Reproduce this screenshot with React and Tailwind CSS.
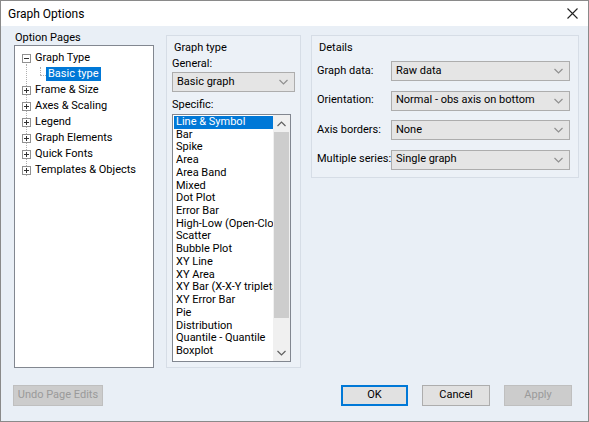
import React from 'react';

const font = { fontFamily: 'Roboto, "Noto Sans", sans-serif' };

const Chevron = ({ up }) => (
    <svg width="9" height="6" viewBox="0 0 9 6" className="block">
        <polyline
            points={up ? '0.5,5 4.5,1 8.5,5' : '0.5,1 4.5,5 8.5,1'}
            fill="none"
            stroke="currentColor"
            strokeWidth="1.2"
        />
    </svg>
);

const Select = ({ value, className = '' }) => (
    <div className={`flex items-center h-[20px] bg-[#e5e5e5] border border-[#adadad] pl-[4px] pr-[6px] text-[#000] ${className}`}>
        <span className="flex-1 truncate">{value}</span>
        <span className="text-[#909090]"><Chevron /></span>
    </div>
);

const Expander = ({ open }) => (
    <div className="relative w-[9px] h-[9px] border border-[#919191] bg-white shrink-0">
        <div className="absolute left-[1px] top-[3px] w-[5px] h-[1px] bg-[#333]" />
        {!open && <div className="absolute left-[3px] top-[1px] w-[1px] h-[5px] bg-[#333]" />}
    </div>
);

const treeItems = ['Frame & Size', 'Axes & Scaling', 'Legend', 'Graph Elements', 'Quick Fonts', 'Templates & Objects'];

const specificItems = [
    'Line & Symbol', 'Bar', 'Spike', 'Area', 'Area Band', 'Mixed', 'Dot Plot', 'Error Bar',
    'High-Low (Open-Close)', 'Scatter', 'Bubble Plot', 'XY Line', 'XY Area', 'XY Bar (X-X-Y triplets)',
    'XY Error Bar', 'Pie', 'Distribution', 'Quantile - Quantile', 'Boxplot'
];

const details = [
    ['Graph data:', 'Raw data'],
    ['Orientation:', 'Normal - obs axis on bottom'],
    ['Axis borders:', 'None'],
    ['Multiple series:', 'Single graph'],
];

export default function App() {
    return (
        <div style={font} className="w-[589px] h-[422px] flex flex-col bg-[#e9eff6] border border-[#8a8a8a] text-[11px] text-[#000] overflow-hidden">
            {/* title bar */}
            <div className="h-[25px] bg-white flex items-center pl-[7px] pr-[10px] shrink-0">
                <span className="flex-1 text-[12px]">Graph Options</span>
                <svg width="11" height="11" viewBox="0 0 11 11">
                    <path d="M0.5 0.5 L10.5 10.5 M10.5 0.5 L0.5 10.5" stroke="#222" strokeWidth="1.1" />
                </svg>
            </div>

            <div className="flex pl-[13px] pt-[5px]">
                {/* option pages */}
                <div className="w-[140px] flex flex-col">
                    <div className="leading-[13px] h-[13px] mb-[1px] pl-[1px]">Option Pages</div>
                    <div className="relative h-[323px] bg-white border border-[#828790] pt-[4px]">
                        {/* tree lines */}
                        <div className="absolute left-[11px] top-[18px] h-[112px] border-l border-dotted border-[#b0b0b0]" />
                        <div className="absolute left-[25px] top-[21px] h-[8px] border-l border-dotted border-[#b0b0b0]" />
                        <div className="absolute left-[25px] top-[29px] w-[6px] border-t border-dotted border-[#b0b0b0]" />
                        <div className="relative flex items-center h-[16px] pl-[7px] gap-[4px]">
                            <Expander open />
                            <span>Graph Type</span>
                        </div>
                        <div className="relative flex items-center h-[16px] pl-[31px]">
                            <span className="bg-[#0078d7] text-white px-[2px] leading-[14px]">Basic type</span>
                        </div>
                        {treeItems.map(t => (
                            <div key={t} className="relative flex items-center h-[16px] pl-[7px] gap-[4px]">
                                <Expander />
                                <span>{t}</span>
                            </div>
                        ))}
                    </div>
                </div>

                {/* graph type group */}
                <div className="ml-[12px] mt-[4px] w-[135px] h-[333px] border border-[#d6dde6] bg-[#ecf1f7] px-[5px] flex flex-col">
                    <div className="pl-[2px] mt-[5px] leading-[13px]">Graph type</div>
                    <div className="mt-[3px] leading-[13px]">General:</div>
                    <Select value="Basic graph" className="mt-[2px]" />
                    <div className="mt-[6px] leading-[13px]">Specific:</div>
                    <div className="mt-[3px] w-[119px] h-[248px] bg-white border border-[#828790] flex">
                        <div className="flex-1 overflow-hidden pt-[1px] pl-[1px]">
                            {specificItems.map((s, i) => (
                                <div
                                    key={s}
                                    className={`h-[12.72px] leading-[12.72px] pl-[2px] whitespace-nowrap overflow-hidden ${i === 0 ? 'bg-[#0078d7] text-white' : ''}`}
                                >
                                    {s}
                                </div>
                            ))}
                        </div>
                        <div className="w-[17px] bg-[#f0f0f0] flex flex-col shrink-0">
                            <div className="h-[17px] flex items-center justify-center text-[#606060]"><Chevron up /></div>
                            <div className="mx-[1px] h-[186px] bg-[#cdcdcd]" />
                            <div className="flex-1" />
                            <div className="h-[17px] flex items-center justify-center text-[#606060]"><Chevron /></div>
                        </div>
                    </div>
                </div>

                {/* details group */}
                <div className="ml-[10px] mt-[4px] w-[268px] h-[143px] border border-[#d6dde6] bg-[#ecf1f7] pl-[5px] pr-[8px] flex flex-col">
                    <div className="pl-[2px] mt-[5px] leading-[13px]">Details</div>
                    <div className="mt-[7px] flex flex-col gap-[9.5px]">
                        {details.map(([label, value]) => (
                            <div key={label} className="flex items-center">
                                <span className="w-[74px] shrink-0 whitespace-nowrap">{label}</span>
                                <Select value={value} className="flex-1" />
                            </div>
                        ))}
                    </div>
                </div>
            </div>

            {/* buttons */}
            <div className="flex items-center mt-[17px] pl-[12px] pr-[16px]">
                <div className="w-[90px] h-[21px] bg-[#cccccc] border border-[#bfbfbf] text-[#9a9a9a] flex items-center justify-center">Undo Page Edits</div>
                <div className="flex-1" />
                <div className="w-[67px] h-[21px] bg-[#e1e1e1] border-2 border-[#0078d7] flex items-center justify-center">OK</div>
                <div className="ml-[14px] w-[68px] h-[21px] bg-[#e1e1e1] border border-[#adadad] flex items-center justify-center">Cancel</div>
                <div className="ml-[14px] w-[68px] h-[21px] bg-[#cccccc] border border-[#bfbfbf] text-[#9a9a9a] flex items-center justify-center">Apply</div>
            </div>
        </div>
    );
}
